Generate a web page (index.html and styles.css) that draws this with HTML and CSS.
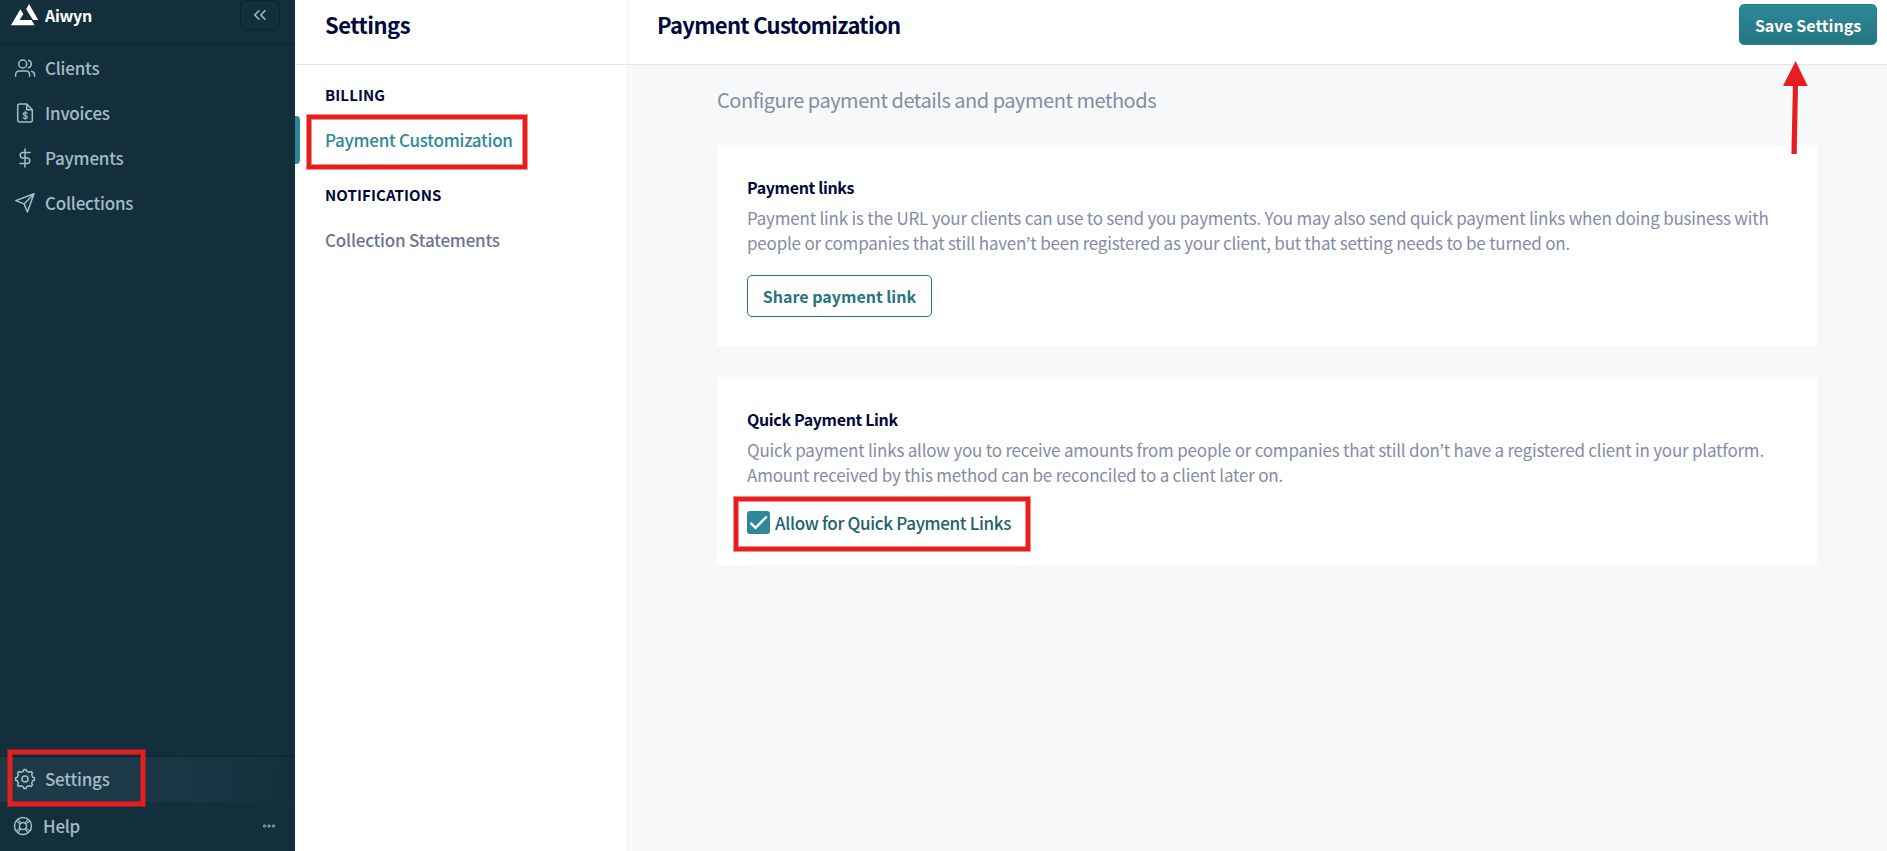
FILE: index.html
```
<!DOCTYPE html>
<html lang="en">
<head>
    <meta charset="UTF-8">
    <meta name="viewport" content="width=device-width, initial-scale=1.0">
    <title>Payment Customization</title>
    <link rel="stylesheet" href="styles.css">
</head>
<body>

<div class="app">
    <aside class="sidebar">
        <div class="brand">
            <svg class="logo" width="28" height="22" viewBox="0 0 28 22" fill="#fff">
                <path d="M0 21.2 9.3 5.2l3 4.8-3.7 6H20.4l3.2 5.2z"/>
                <path d="M15.2 5.3 18 0l9.3 16.1h-5.3z"/>
            </svg>
            <span class="brand-name">Aiwyn</span>
            <button class="collapse">
                <svg width="14" height="12" viewBox="0 0 14 12">
                    <path d="M6 1.8 1.8 6 6 10.2M12 1.8 7.8 6 12 10.2"/>
                </svg>
            </button>
        </div>

        <nav class="nav">
            <a class="nav-item">
                <svg width="22" height="20" viewBox="0 0 22 20">
                    <circle cx="8.7" cy="6" r="4"/>
                    <path d="M1.6 18.3v-1.5c0-2.3 1.5-3.8 3.8-3.8h6.4c2.3 0 3.8 1.5 3.8 3.8v1.5M14.5 2.2a4 4 0 0 1 0 7.6M17.7 13.2c1.8.5 2.8 1.9 2.8 3.7v1.4"/>
                </svg>
                <span>Clients</span>
            </a>
            <a class="nav-item">
                <svg width="22" height="20" viewBox="0 0 22 20">
                    <path d="M12.7 1H5.6C4.4 1 3.7 1.8 3.7 3v14c0 1.2.7 2 1.9 2h10.8c1.2 0 1.9-.8 1.9-2V6.8zM12.7 1v5.8h5.6"/>
                    <path class="thin" d="M13.3 10.6c-.3-.7-1-1-2.1-1-1.3 0-2.1.5-2.1 1.5 0 2.1 4.4.9 4.4 3 0 1-.9 1.5-2.3 1.5-1.2 0-2-.4-2.3-1.2M11.2 8.4v8.4"/>
                </svg>
                <span>Invoices</span>
            </a>
            <a class="nav-item">
                <svg width="22" height="20" viewBox="0 0 22 20">
                    <path d="M11 1v18M16 4.4H9a2.8 2.8 0 0 0 0 5.6h4a2.8 2.8 0 0 1 0 5.6H5.8"/>
                </svg>
                <span>Payments</span>
            </a>
            <a class="nav-item">
                <svg width="22" height="20" viewBox="0 0 22 20">
                    <path d="M20 .8 1.8 7.6l8.3 3.3 3.3 8zM20 .8l-9.9 10.1"/>
                </svg>
                <span>Collections</span>
            </a>
        </nav>

        <div class="nav-bottom">
            <a class="nav-item active">
                <svg width="22" height="22" viewBox="0 0 22 22">
                    <circle cx="11" cy="11" r="3"/>
                    <path d="M9.4 3.2 9.9 1.5h2.2l.5 1.7a8 8 0 0 1 2.7 1.1l1.6-.9 1.6 1.6-.9 1.6a8 8 0 0 1 1.1 2.7l1.7.5v2.4l-1.7.5a8 8 0 0 1-1.1 2.7l.9 1.6-1.6 1.6-1.6-.9a8 8 0 0 1-2.7 1.1l-.5 1.7H9.9l-.5-1.7a8 8 0 0 1-2.7-1.1l-1.6.9-1.6-1.6.9-1.6a8 8 0 0 1-1.1-2.7l-1.7-.5V9.8l1.7-.5a8 8 0 0 1 1.1-2.7l-.9-1.6 1.6-1.6 1.6.9a8 8 0 0 1 2.7-1.1z"/>
                </svg>
                <span>Settings</span>
            </a>
            <a class="nav-item help">
                <svg width="20" height="20" viewBox="0 0 20 20">
                    <circle cx="10" cy="10" r="8.5"/>
                    <circle cx="10" cy="10" r="3.6"/>
                    <path class="thin" d="m3.2 5 3.9 2.900M5 3.200l2.900 3.900M16.800 5l-3.900 2.900M15 3.200l-2.900 3.900M3.200 15l3.900-2.900M5 16.800l2.900-3.900M16.800 15l-3.900-2.900M15 16.800l-2.900-3.900"/>
                </svg>
                <span>Help</span>
                <svg class="dots" width="12" height="4" viewBox="0 0 12 4">
                    <circle cx="1.5" cy="2" r="1.1"/>
                    <circle cx="6" cy="2" r="1.1"/>
                    <circle cx="10.5" cy="2" r="1.1"/>
                </svg>
            </a>
        </div>
    </aside>

    <section class="panel">
        <h1 class="panel-title">Settings</h1>
        <div class="menu">
            <h2 class="menu-label">BILLING</h2>
            <a class="menu-item selected">Payment Customization</a>
            <h2 class="menu-label">NOTIFICATIONS</h2>
            <a class="menu-item">Collection Statements</a>
        </div>
    </section>

    <main class="main">
        <header class="header">
            <h1>Payment Customization</h1>
            <button class="btn-primary">Save Settings</button>
        </header>

        <div class="content">
            <p class="intro">Configure payment details and payment methods</p>

            <div class="card">
                <h3>Payment links</h3>
                <p>Payment link is the URL your clients can use to send you payments. You may also send quick payment links when doing business with<br>people or companies that still haven’t been registered as your client, but that setting needs to be turned on.</p>
                <button class="btn-outline">Share payment link</button>
            </div>

            <div class="card">
                <h3>Quick Payment Link</h3>
                <p>Quick payment links allow you to receive amounts from people or companies that still don’t have a registered client in your platform.<br>Amount received by this method can be reconciled to a client later on.</p>
                <label class="check">
                    <span class="box">
                        <svg width="23" height="23" viewBox="0 0 23 23">
                            <path d="m3.5 11.8 5 5L19.8 5.5"/>
                        </svg>
                    </span>
                    <span>Allow for Quick Payment Links</span>
                </label>
            </div>
        </div>
    </main>
</div>

<!-- highlights -->
<div class="mark mark-settings"></div>
<div class="mark mark-menu"></div>
<div class="mark mark-check"></div>
<svg class="arrow" width="26" height="94" viewBox="0 0 26 94">
    <path d="M12.6 0 24.7 25H15l-1.3 68H8.4L9.9 25H0z"/>
</svg>

</body>
</html>
```
FILE: styles.css
```
* {
    box-sizing: border-box;
}

body {
    margin: 0;
    height: 100vh;
    font-family: "Noto Sans CJK KR", "Noto Sans", sans-serif;
    font-size: 17px;
    overflow: hidden;
    color: #00093c;
}

h1, h2, h3, p {
    margin: 0;
}

button {
    font-family: inherit;
    padding: 0;
    cursor: pointer;
}

svg {
    display: block;
    flex: none;
}

.app {
    display: flex;
    height: 100vh;
}

/* Sidebar */
.sidebar {
    width: 295px;
    flex: none;
    display: flex;
    flex-direction: column;
    background: #142f3c;
    color: #a3bcc9;
}

.brand {
    height: 45px;
    display: flex;
    align-items: flex-start;
    padding: 0 15px 0 11px;
    border-bottom: 1px solid #0d2430;
}

.logo {
    margin-top: 4px;
}

.brand-name {
    margin-left: 6px;
    line-height: 31px;
    font-size: 16px;
    font-weight: 700;
    letter-spacing: -0.3px;
    color: #fff;
}

.collapse {
    width: 40px;
    height: 30px;
    margin-left: auto;
    display: flex;
    align-items: center;
    justify-content: center;
    background: none;
    border: 1px solid #0d2430;
    border-radius: 5px;
}

.sidebar svg:not(.logo) {
    fill: none;
    stroke: #a3bcc9;
    stroke-width: 1.5;
    stroke-linejoin: round;
    stroke-linecap: round;
}

.sidebar svg .thin {
    stroke-width: 1.1;
}

.nav {
    padding-top: 1px;
}

.nav-item {
    height: 45px;
    display: flex;
    align-items: center;
    gap: 9px;
    padding: 0 20px 0 14px;
    font-weight: 500;
    letter-spacing: -0.22px;
    line-height: 26px;
}

.nav-item span {
    margin-top: -1px;
}

.nav-item svg {
    margin-top: -2px;
}

.nav-bottom {
    margin-top: auto;
    border-top: 1px solid #0d2430;
}

.nav-item.active {
    background: linear-gradient(90deg, #1e3a49 0%, #1d3948 45%, #142f3c 100%);
}

.nav-item.help {
    height: 49px;
    gap: 10px;
    padding-left: 13px;
}

.sidebar .nav-item .dots {
    margin-left: auto;
    stroke-width: 1;
}

/* Settings panel */
.panel {
    width: 333px;
    flex: none;
    background: #fff;
    border-right: 1px solid #eff1f4;
}

.panel-title {
    height: 65px;
    padding-left: 30px;
    line-height: 48px;
    font-size: 22px;
    letter-spacing: -0.5px;
    border-bottom: 1px solid #e3e5ea;
}

.menu {
    padding-top: 15px;
}

.menu-label {
    height: 29px;
    margin-bottom: 7px;
    padding-left: 30px;
    line-height: 29px;
    font-size: 15px;
    letter-spacing: 0.1px;
}

.menu-item {
    height: 48px;
    display: flex;
    margin-bottom: 16px;
    padding-left: 30px;
    line-height: 47px;
    font-weight: 500;
    letter-spacing: -0.2px;
    color: #6c748f;
}

.menu-item.selected {
    padding-left: 0;
    letter-spacing: -0.26px;
    color: #2e8899;
}

.menu-item.selected::before {
    content: "";
    width: 5px;
    margin-right: 25px;
    border-radius: 0 4px 4px 0;
    background: #2e8899;
}

/* Main */
.main {
    flex: 1;
    background: #f7f8fa;
}

.header {
    height: 65px;
    display: flex;
    justify-content: space-between;
    align-items: flex-start;
    padding: 0 10px 0 29px;
    background: #fff;
    border-bottom: 1px solid #e3e5ea;
}

.header h1 {
    line-height: 48px;
    font-size: 22px;
    letter-spacing: -0.7px;
}

.btn-primary {
    width: 138px;
    height: 41px;
    margin-top: 4px;
    font-size: 16px;
    font-weight: 700;
    color: #fff;
    background: linear-gradient(#2e8899, #257582);
    border: 1px solid #257b89;
    border-radius: 5px;
}

.content {
    padding: 20px 70px 0 89px;
}

.intro {
    height: 30px;
    margin-bottom: 30px;
    line-height: 29px;
    font-size: 20px;
    letter-spacing: -0.48px;
    color: #858ca3;
}

.card {
    margin-bottom: 30px;
    padding: 30px;
    background: #fff;
}

.card h3 {
    height: 26px;
    margin-bottom: 4px;
    line-height: 25px;
    font-size: 16px;
    letter-spacing: -0.35px;
}

.card p {
    line-height: 25px;
    letter-spacing: -0.21px;
    white-space: nowrap;
    color: #858ca3;
}

.btn-outline {
    width: 185px;
    height: 42px;
    display: block;
    margin-top: 20px;
    font-size: 16px;
    font-weight: 700;
    color: #257582;
    background: #fff;
    border: 1px solid #257582;
    border-radius: 5px;
}

.check {
    height: 24px;
    display: flex;
    align-items: flex-start;
    gap: 5px;
    margin-top: 24px;
    font-weight: 500;
    letter-spacing: -0.33px;
    line-height: 24px;
    color: #1d616d;
}

.box {
    width: 23px;
    height: 23px;
    border-radius: 3px;
    background: #2e8899;
}

.box path {
    fill: none;
    stroke: #fff;
    stroke-width: 2.4;
}

/* Highlights */
.mark {
    position: absolute;
    border: 4px solid #e81e1e;
    box-shadow: 0 0 0 1px rgba(232, 30, 30, 0.5), inset 0 0 0 1px rgba(232, 30, 30, 0.5);
}

.mark-settings {
    left: 8px;
    top: 750px;
    width: 137px;
    height: 56px;
}

.mark-menu {
    left: 307px;
    top: 115px;
    width: 220px;
    height: 54px;
}

.mark-check {
    left: 734px;
    top: 497px;
    width: 296px;
    height: 54px;
}

.arrow {
    position: absolute;
    left: 1783px;
    top: 61px;
    fill: #e81e1e;
}
```
